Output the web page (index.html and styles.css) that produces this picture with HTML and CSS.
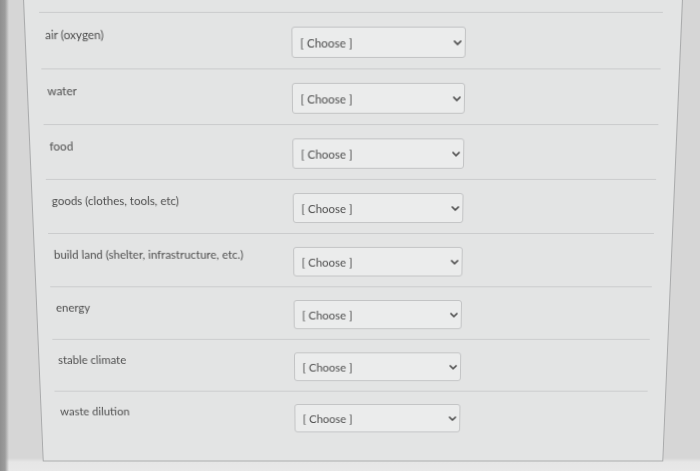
FILE: index.html
```html
<!DOCTYPE html>
<html lang="en">
<head>
<meta charset="utf-8">
<title>Matching</title>
<link rel="stylesheet" href="styles.css">
</head>
<body>
<div class="screen">
  <div class="panel">
    <div class="row">
      <div class="label">air (oxygen)</div>
      <div class="select"><span>[ Choose ]</span><svg class="chev" width="8" height="5" viewBox="0 0 8 5"><path d="M1 1 L4 4 L7 1" /></svg></div>
    </div>
    <div class="row">
      <div class="label">water</div>
      <div class="select"><span>[ Choose ]</span><svg class="chev" width="8" height="5" viewBox="0 0 8 5"><path d="M1 1 L4 4 L7 1" /></svg></div>
    </div>
    <div class="row">
      <div class="label">food</div>
      <div class="select"><span>[ Choose ]</span><svg class="chev" width="8" height="5" viewBox="0 0 8 5"><path d="M1 1 L4 4 L7 1" /></svg></div>
    </div>
    <div class="row">
      <div class="label">goods (clothes, tools, etc)</div>
      <div class="select"><span>[ Choose ]</span><svg class="chev" width="8" height="5" viewBox="0 0 8 5"><path d="M1 1 L4 4 L7 1" /></svg></div>
    </div>
    <div class="row">
      <div class="label">build land (shelter, infrastructure, etc.)</div>
      <div class="select"><span>[ Choose ]</span><svg class="chev" width="8" height="5" viewBox="0 0 8 5"><path d="M1 1 L4 4 L7 1" /></svg></div>
    </div>
    <div class="row">
      <div class="label">energy</div>
      <div class="select"><span>[ Choose ]</span><svg class="chev" width="8" height="5" viewBox="0 0 8 5"><path d="M1 1 L4 4 L7 1" /></svg></div>
    </div>
    <div class="row">
      <div class="label">stable climate</div>
      <div class="select"><span>[ Choose ]</span><svg class="chev" width="8" height="5" viewBox="0 0 8 5"><path d="M1 1 L4 4 L7 1" /></svg></div>
    </div>
    <div class="row">
      <div class="label">waste dilution</div>
      <div class="select"><span>[ Choose ]</span><svg class="chev" width="8" height="5" viewBox="0 0 8 5"><path d="M1 1 L4 4 L7 1" /></svg></div>
    </div>
  </div>
</div>
</body>
</html>
```
FILE: styles.css
```css
html, body {
  margin: 0;
  padding: 0;
}

body {
  width: 700px;
  height: 471px;
  overflow: hidden;
  font-family: Lato, "Liberation Sans", sans-serif;
  background:
    linear-gradient(to right, #8f8f8f 0, #9c9c9c 5px, rgba(210, 210, 210, 0) 9px),
    linear-gradient(to bottom, #d6d6d6 0, #d6d6d6 458px, #e6e6e6 462px, #e8e8e8 100%);
}

.screen {
  height: 471px;
  box-sizing: border-box;
  padding-left: 33px;
  transform-origin: 353px 233px;
  transform: perspective(800px) rotateX(-6.1deg);
}

.panel {
  width: 640px;
  box-sizing: border-box;
  border: 1px solid #a9aaab;
  background: #e3e4e4;
  padding: 16px 18px 20px 14px;
}

.row {
  display: grid;
  grid-template-columns: 239.5px 170px;
  align-items: start;
  border-top: 1px solid #cbcccd;
  padding: 13px 0 10px 5px;
}

.label {
  font-size: 11.5px;
  line-height: 16px;
  color: #4e4e4e;
}

.select {
  height: 30px;
  box-sizing: border-box;
  border: 1px solid #c3c4c5;
  border-radius: 3px;
  background: #ebecec;
  display: flex;
  align-items: center;
  justify-content: space-between;
  padding: 0 3px 0 8px;
  font-size: 11.5px;
  color: #4e4e4e;
}

.chev {
  display: block;
}

.chev path {
  fill: none;
  stroke: #4a4a4a;
  stroke-width: 1.7;
  stroke-linecap: round;
  stroke-linejoin: round;
}
```
